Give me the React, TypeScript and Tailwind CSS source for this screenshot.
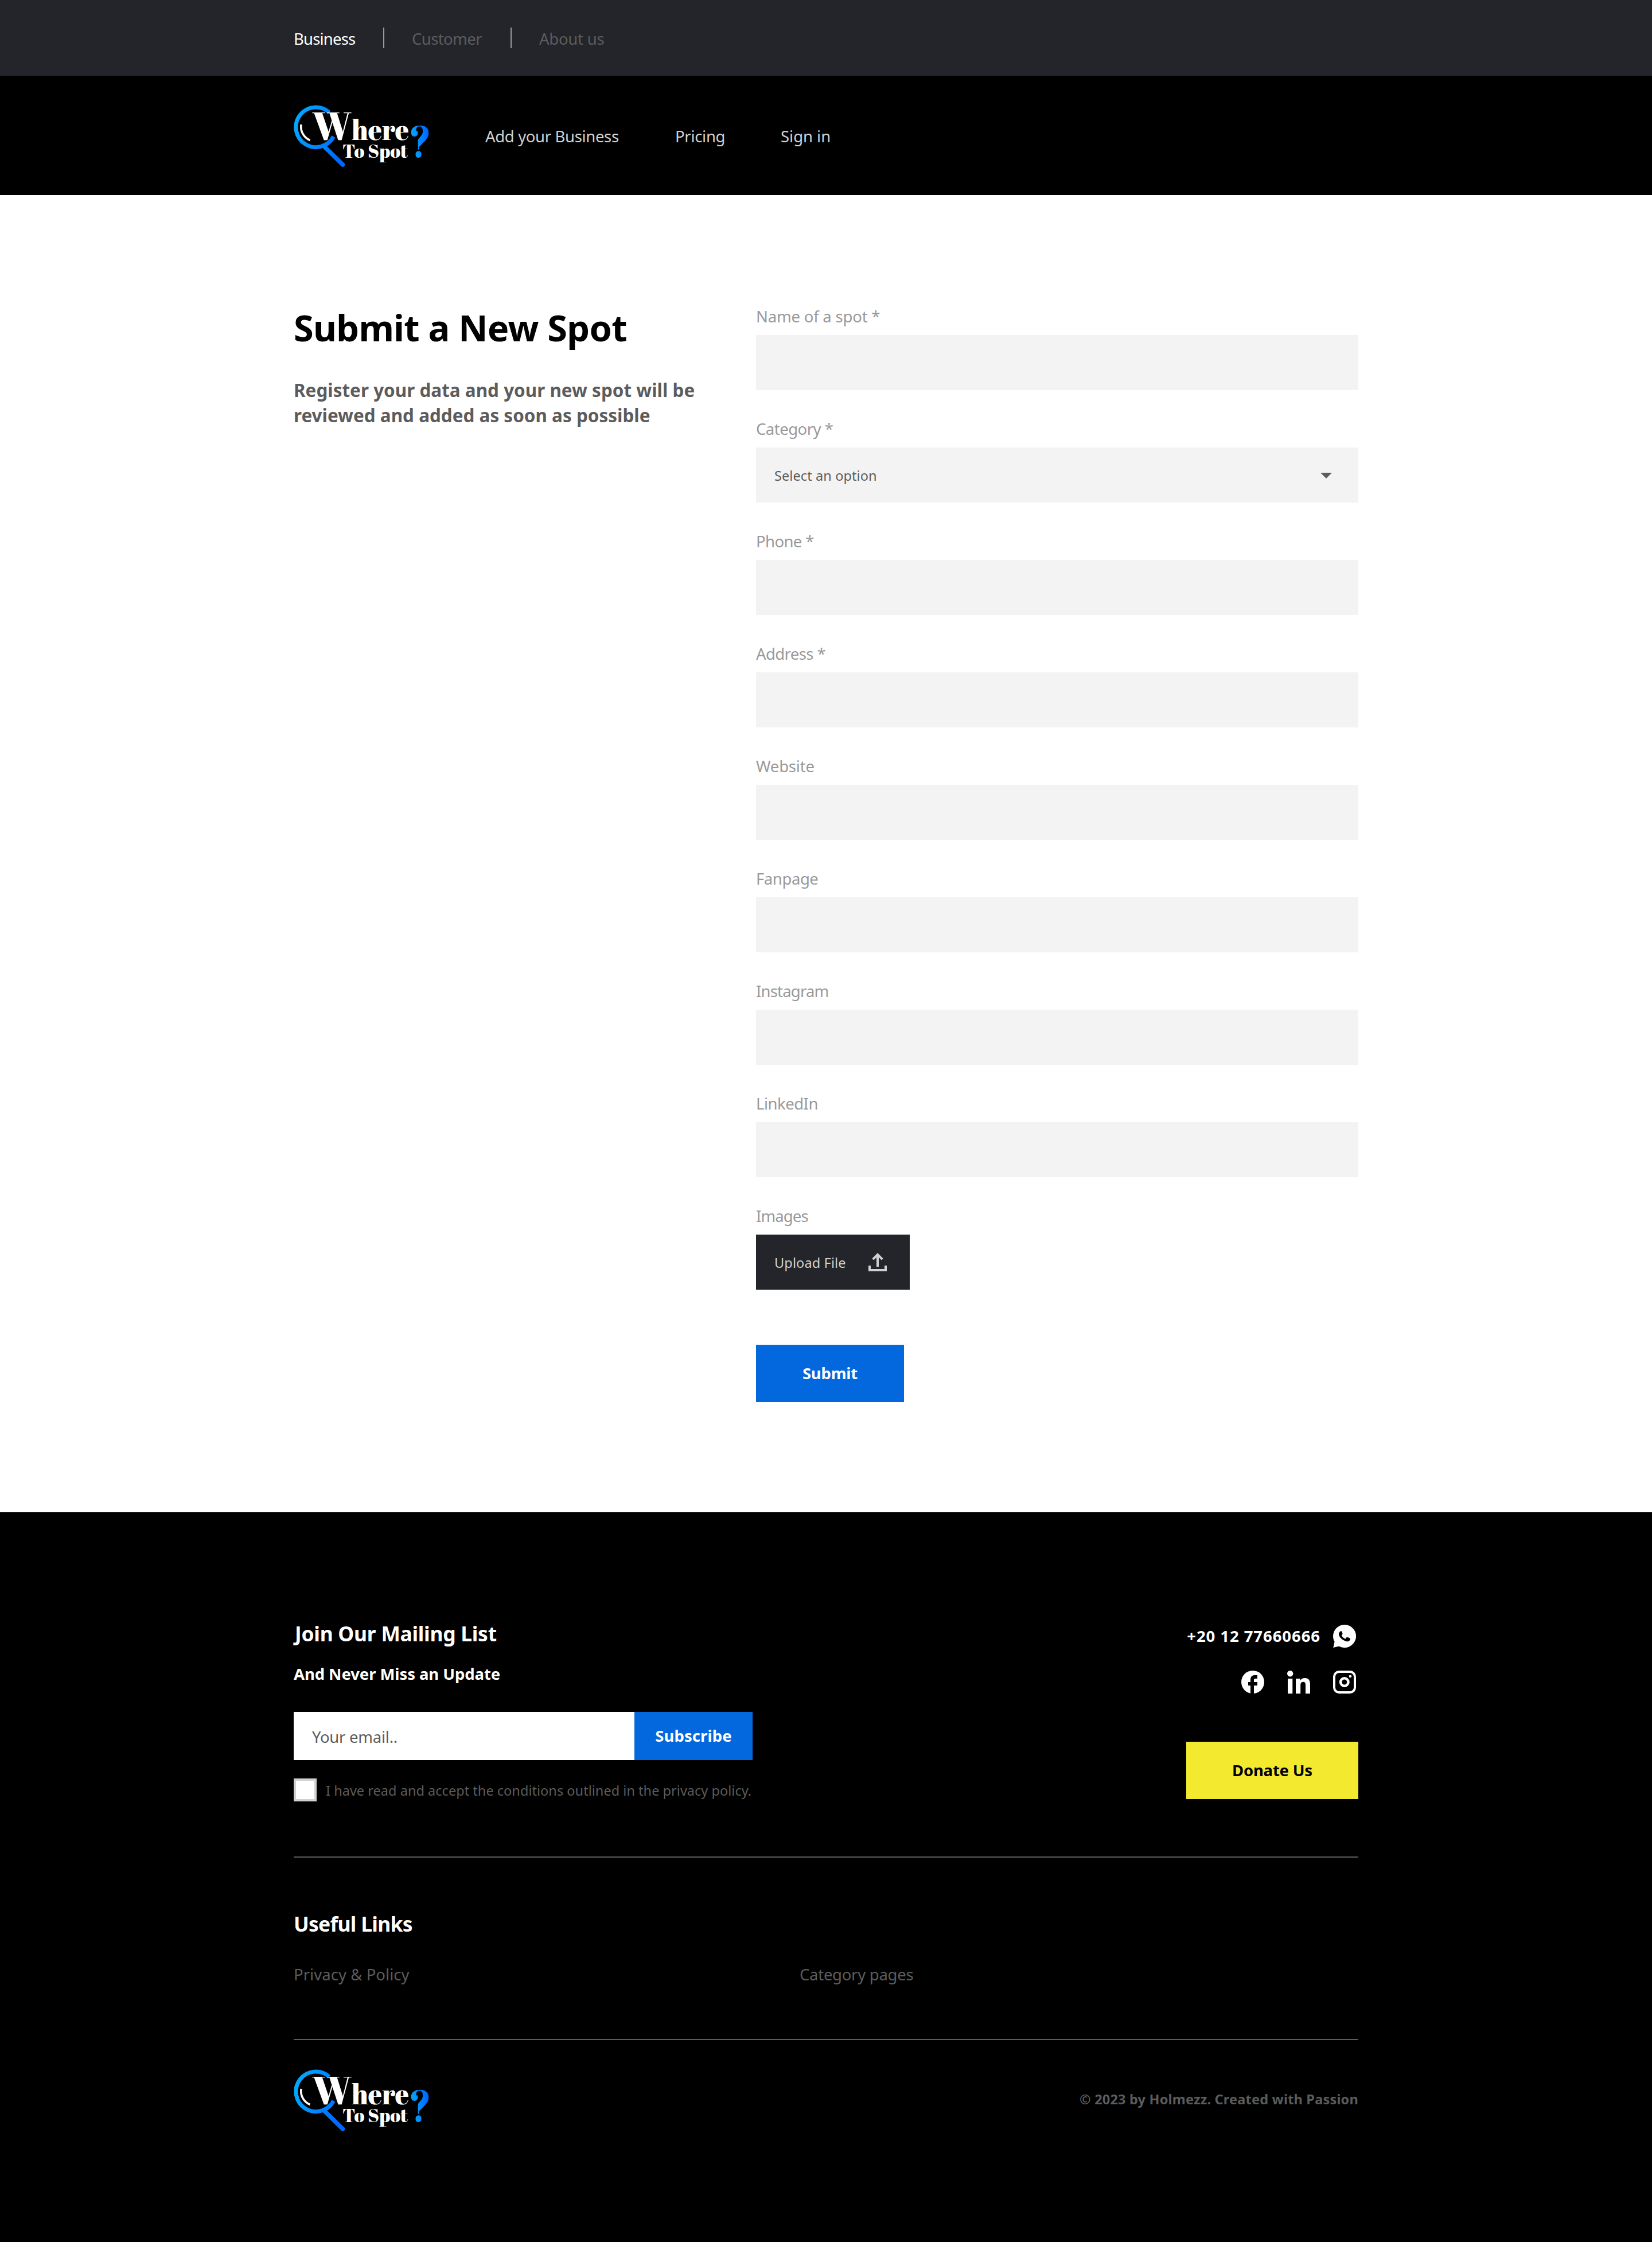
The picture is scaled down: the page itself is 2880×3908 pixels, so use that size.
import type { ReactNode } from "react";

const LOGO_FONT = "font-['Abril_Fatface','Playfair_Display','Liberation_Serif',serif]";

function Logo({ id }: { id: string }) {
  return (
    <svg className="block h-[112px] w-[240px] shrink-0 overflow-visible" viewBox="0 0 240 112" fill="none" role="img" aria-label="Where To Spot?">
      <defs>
        <linearGradient id={`${id}-ring`} gradientUnits="userSpaceOnUse" x1="0" y1="30" x2="90" y2="60">
          <stop offset="0" stopColor="#00aaff" />
          <stop offset="1" stopColor="#0068ff" />
        </linearGradient>
        <linearGradient id={`${id}-mark`} gradientUnits="userSpaceOnUse" x1="204" y1="60" x2="236" y2="56">
          <stop offset="0" stopColor="#00aaff" />
          <stop offset="1" stopColor="#0062ff" />
        </linearGradient>
      </defs>
      <path d="M62 15.9A34.8 34.8 0 1 0 69.5 58" stroke={`url(#${id}-ring)`} strokeWidth="7" />
      <path d="M52 74L85.5 107" stroke={`url(#${id}-ring)`} strokeWidth="7.5" strokeLinecap="round" />
      <path d="M13 37A25.5 25.5 0 0 0 28.5 64.5" stroke="#fff" strokeWidth="3.6" />
      <g className={LOGO_FONT} fill="#fff">
        <text x="32" y="64.3" fontSize="67" textLength="69" lengthAdjust="spacingAndGlyphs">W</text>
        <text x="101" y="64.3" fontSize="49" textLength="100" lengthAdjust="spacingAndGlyphs">here</text>
        <text x="85" y="95.3" fontSize="32.5" textLength="114" lengthAdjust="spacingAndGlyphs">To Spot</text>
        <text x="200.8" y="94" fontSize="78" textLength="39" lengthAdjust="spacingAndGlyphs" fill={`url(#${id}-mark)`}>?</text>
      </g>
    </svg>
  );
}

function UploadIcon() {
  return (
    <svg className="size-8" viewBox="0 0 32 32" fill="none" stroke="#d1d1d1" strokeWidth="4">
      <path d="M2 22V30H30V22" />
      <path d="M16 24V3" />
      <path d="M7.7 11.2L16 2.9L24.3 11.2" />
    </svg>
  );
}

function WhatsappIcon() {
  return (
    <svg className="m-1 size-10" viewBox="0 0 40 40">
      <path fill="#fff" d="M20 0A20 20 0 1 1 10.2 37.4L0.3 40L2.6 29.8A20 20 0 0 1 20 0Z" />
      <path fill="#000" d="M13.4 11.2C12 12.2 10 13.8 10 16.2C10 19 12 22.3 15.2 25C18.4 27.7 22.5 29.2 25 29.2C27.6 29.2 29.6 27.5 30 25.2C30.1 24.3 29.9 23.9 29.2 23.5L25.2 21.7C24.5 21.4 24 21.5 23.6 22.1L22.2 24C21.8 24.5 21.3 24.6 20.7 24.3C18.2 23.2 16.4 21.4 15.1 19.2C14.8 18.6 14.9 18.2 15.3 17.7L16.3 16.4C16.6 16 16.6 15.6 16.4 15.1L14.9 11.6C14.6 10.9 14 10.8 13.4 11.2Z" />
    </svg>
  );
}

function FacebookIcon() {
  return (
    <svg className="m-1 size-10" viewBox="0 0 40 40">
      <circle cx="20" cy="20" r="20" fill="#fff" />
      <path fill="#000" d="M16 40V26H12V20H16V15.5C16 11 18.8 8 23 8H28V14H24.5C23 14 22 14.8 22 16.5V20H28V26H22V40Z" />
    </svg>
  );
}

function LinkedinIcon() {
  return (
    <svg className="m-1 size-10" viewBox="0 0 40 40" fill="#fff">
      <circle cx="5.2" cy="5.2" r="5.2" />
      <path d="M1 14H9.3V40H1Z" />
      <path d="M15 14H22.8V17.3C24 15 26.6 13 30.7 13C38 13 40 17.8 40 24V40H32V26C32 22.5 31.7 19.8 27.8 19.8C24 19.8 23.2 22.6 23.2 26V40H15Z" />
    </svg>
  );
}

function InstagramIcon() {
  return (
    <svg className="m-1 size-10" viewBox="0 0 40 40" fill="none" stroke="#fff">
      <rect x="2" y="2" width="36" height="36" rx="8.5" strokeWidth="4" />
      <circle cx="19.8" cy="20" r="6.7" strokeWidth="4.5" />
      <circle cx="30" cy="10" r="2.3" fill="#fff" stroke="none" />
    </svg>
  );
}

type FieldProps = { label: string; tracking: string; children?: ReactNode };

function Field({ label, tracking, children }: FieldProps) {
  return (
    <div>
      <div className={`mb-3 text-[27.5px] leading-[40px] text-[#999999] ${tracking}`}>{label}</div>
      {children ?? <div className="h-24 bg-[#f3f3f3]" />}
    </div>
  );
}

export default function App() {
  return (
    <div className="w-[2880px] bg-white font-['Noto_Sans','Open_Sans',sans-serif] whitespace-nowrap text-black">
      <div className="h-[132px] bg-[#24252a] px-[512px] pt-12">
        <div className="flex h-9 gap-12 text-[27.5px] leading-[40px] text-[#5c5c5c]">
          <span className="w-[108px] tracking-[-0.83px] text-white">Business</span>
          <span className="w-0.5 bg-[#999999]" />
          <span className="w-[124px] tracking-[-0.6px]">Customer</span>
          <span className="w-0.5 bg-[#999999]" />
          <span className="tracking-[-0.25px]">About us</span>
        </div>
      </div>

      <header className="flex h-[208px] items-center bg-black px-[512px]">
        <Logo id="top" />
        <nav className="ml-[94px] flex pt-1 text-[27.5px] leading-[38px] text-[#d1d1d1]">
          <span className="w-[331px] tracking-[-0.35px]">Add your Business</span>
          <span className="w-[184px] tracking-[-0.3px]">Pricing</span>
          <span className="tracking-[-0.03px]">Sign in</span>
        </nav>
      </header>

      <main className="flex px-[512px] py-48">
        <div className="w-[806px] pt-0.5">
          <h1 className="text-[63px] leading-[74px] font-bold tracking-[-0.7px]">Submit a New Spot</h1>
          <p className="mt-[50px] text-[31.4px] leading-[44px] font-bold tracking-[0.03px] text-[#5c5c5c]">
            Register your data and your new spot will be
            <br />
            reviewed and added as soon as possible
          </p>
        </div>
        <form className="flex w-[1050px] flex-col gap-12">
          <Field label="Name of a spot *" tracking="tracking-[-0.2px]" />
          <Field label="Category *" tracking="tracking-[-0.52px]">
            <div className="flex h-24 items-center justify-between bg-[#f3f3f3] pr-[46px] pl-8 text-[23.5px] leading-[34px] tracking-[0.1px] text-[#5c5c5c]">
              <span className="pt-px">Select an option</span>
              <svg className="mt-0.5 h-2.5 w-5" viewBox="0 0 20 10" fill="#5c5c5c">
                <path d="M0 0H20L10 10Z" />
              </svg>
            </div>
          </Field>
          <Field label="Phone *" tracking="tracking-[-0.6px]" />
          <Field label="Address *" tracking="tracking-[-0.6px]" />
          <Field label="Website" tracking="tracking-[-0.2px]" />
          <Field label="Fanpage" tracking="tracking-[-0.43px]" />
          <Field label="Instagram" tracking="tracking-[-0.8px]" />
          <Field label="LinkedIn" tracking="tracking-[-0.5px]" />
          <Field label="Images" tracking="tracking-[-0.9px]">
            <div className="flex h-24 w-[268px] items-center justify-between bg-[#24252a] pr-10 pl-8 text-[23.5px] leading-[34px] tracking-[0.13px] text-[#d1d1d1]">
              <span className="pt-px">Upload File</span>
              <UploadIcon />
            </div>
          </Field>
          <button className="mt-12 h-[100px] w-[258px] bg-[#0368dd] text-[27.5px] leading-[38px] font-bold tracking-[-0.2px] text-white">
            Submit
          </button>
        </form>
      </main>

      <footer className="bg-black px-[512px] pt-[186px] pb-48 text-white">
        <div className="flex justify-between border-b-2 border-[#5c5c5c] pb-24">
          <div>
            <h2 className="pt-px pl-0.5 text-[35.4px] leading-[48px] font-bold tracking-[-0.25px]">Join Our Mailing List</h2>
            <h3 className="mt-7 text-[27.5px] leading-[38px] font-bold tracking-[-0.08px]">And Never Miss an Update</h3>
            <div className="mt-[47px] flex h-[84px]">
              <div className="flex w-[594px] items-center bg-white px-8 pt-1 text-[27.5px] leading-[38px] tracking-[-0.25px] text-[#5c5c5c]">
                Your email..
              </div>
              <button className="w-[206px] bg-[#0368dd] text-[27.5px] leading-[38px] font-bold tracking-[0.07px] text-white">
                Subscribe
              </button>
            </div>
            <div className="mt-8 flex h-10 items-center gap-4">
              <span className="size-10 border-4 border-[#d1d1d1] bg-white" />
              <span className="pt-px text-[23.5px] leading-[34px] tracking-[0.03px] text-[#5c5c5c]">
                I have read and accept the conditions outlined in the privacy policy.
              </span>
            </div>
          </div>
          <div className="flex flex-col items-end pt-1.5">
            <div className="flex h-12 items-center gap-[18px]">
              <span className="text-[27.5px] leading-[38px] font-bold tracking-[0.93px]">+20 12 77660666</span>
              <WhatsappIcon />
            </div>
            <div className="mt-8 flex gap-8">
              <FacebookIcon />
              <LinkedinIcon />
              <InstagramIcon />
            </div>
            <button className="mt-20 h-[100px] w-[300px] bg-[#f3e92f] text-[27.5px] leading-[38px] font-bold tracking-[-0.2px] text-black">
              Donate Us
            </button>
          </div>
        </div>

        <div className="border-b-2 border-[#5c5c5c] pt-[91px] pb-[93px]">
          <h2 className="text-[35.4px] leading-[48px] font-bold tracking-[-0.7px]">Useful Links</h2>
          <div className="mt-[46px] flex text-[27.5px] leading-[38px] text-[#5c5c5c]">
            <span className="w-[882px] tracking-[0.05px]">Privacy &amp; Policy</span>
            <span className="tracking-[-0.28px]">Category pages</span>
          </div>
        </div>

        <div className="flex items-center justify-between pt-12">
          <Logo id="bottom" />
          <span className="pb-0.5 text-[23.5px] leading-[34px] font-bold tracking-[0.2px] text-[#5c5c5c]">
            © 2023 by Holmezz. Created with Passion
          </span>
        </div>
      </footer>
    </div>
  );
}
